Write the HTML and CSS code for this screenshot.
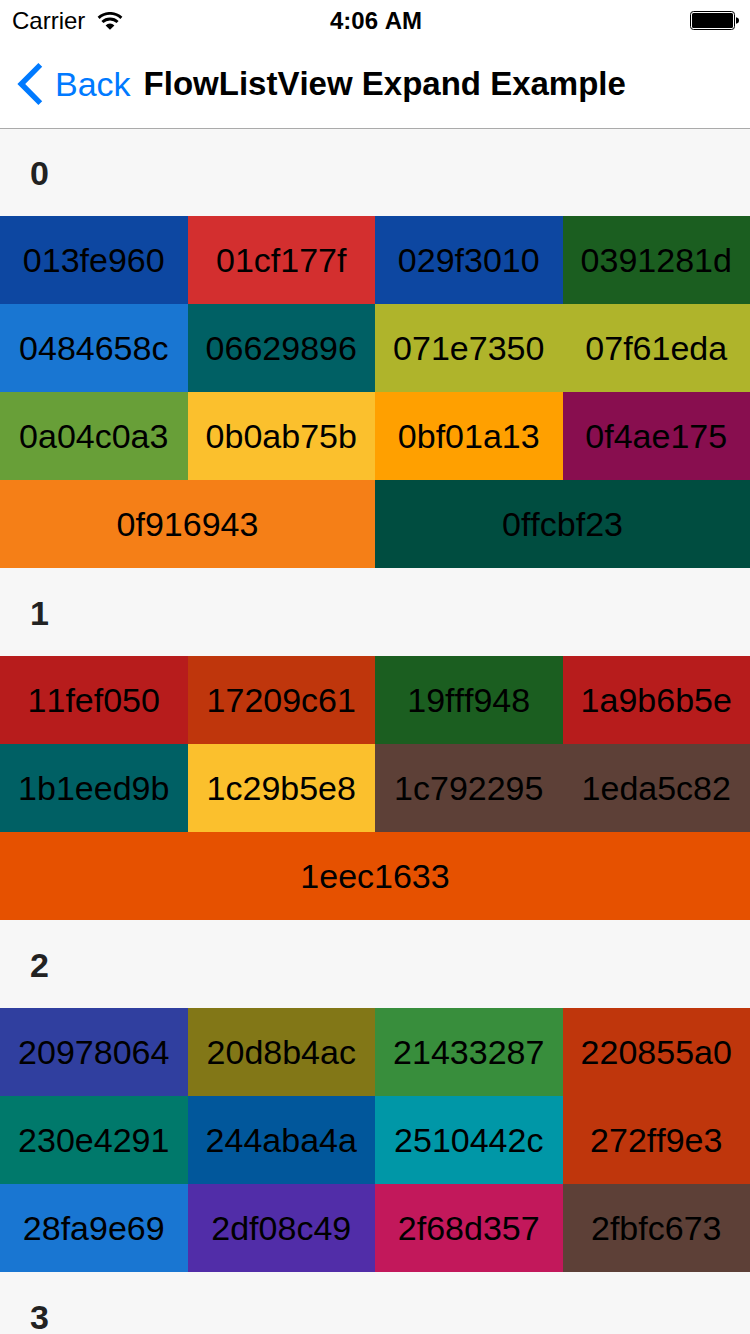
FILE: index.html
```html
<!DOCTYPE html>
<html lang="en">
<head>
<meta charset="utf-8">
<meta name="viewport" content="width=device-width, initial-scale=1">
<title>FlowListView Expand Example</title>
<link rel="stylesheet" href="styles.css">
</head>
<body>
<header class="top">
  <div class="status">
    <div class="carrier">
      <span>Carrier</span>
      <svg class="wifi" viewBox="0 0 26 18" aria-hidden="true">
        <path d="M1.6 5.8A17 17 0 0 1 24.4 5.8" fill="none" stroke="#000" stroke-width="2.9"/>
        <path d="M5.4 10A11 11 0 0 1 20.6 10" fill="none" stroke="#000" stroke-width="2.9"/>
        <path d="M8.6 13.4A6.2 6.2 0 0 1 17.4 13.4L13 17.8Z"/>
      </svg>
    </div>
    <time class="clock">4:06 AM</time>
    <svg class="battery" viewBox="0 0 50 20" aria-hidden="true">
      <rect x=".5" y=".5" width="44" height="18" rx="3" fill="#fff" stroke="#000"/>
      <rect x="2" y="2" width="41" height="15" rx="1.5"/>
      <path d="M46 6.2Q49 6.8 49 9.5T46 12.8Z"/>
    </svg>
  </div>
  <nav class="nav">
    <button class="back" type="button">
      <svg class="chevron" viewBox="0 0 26 42" aria-hidden="true">
        <path d="M21.4 0L25.2 3.8L8.2 21L25.2 38.2L21.4 42L0.4 21Z" fill="#007aff"/>
      </svg>
      <span>Back</span>
    </button>
    <h1 class="title">FlowListView Expand Example</h1>
  </nav>
</header>
<main class="list">
  <section>
    <h2 class="group">0</h2>
    <div class="row"><div class="cell blue-dark">013fe960</div><div class="cell red">01cf177f</div><div class="cell blue-dark">029f3010</div><div class="cell green-dark">0391281d</div></div>
    <div class="row"><div class="cell blue">0484658c</div><div class="cell cyan-dark">06629896</div><div class="cell lime">071e7350</div><div class="cell lime">07f61eda</div></div>
    <div class="row"><div class="cell green-light">0a04c0a3</div><div class="cell yellow">0b0ab75b</div><div class="cell amber">0bf01a13</div><div class="cell pink-dark">0f4ae175</div></div>
    <div class="row"><div class="cell yellow-dark">0f916943</div><div class="cell teal-dark">0ffcbf23</div></div>
  </section>
  <section>
    <h2 class="group">1</h2>
    <div class="row"><div class="cell red-dark">11fef050</div><div class="cell rust">17209c61</div><div class="cell green-dark">19fff948</div><div class="cell red-dark">1a9b6b5e</div></div>
    <div class="row"><div class="cell cyan-dark">1b1eed9b</div><div class="cell yellow">1c29b5e8</div><div class="cell brown">1c792295</div><div class="cell brown">1eda5c82</div></div>
    <div class="row"><div class="cell orange">1eec1633</div></div>
  </section>
  <section>
    <h2 class="group">2</h2>
    <div class="row"><div class="cell indigo">20978064</div><div class="cell lime-dark">20d8b4ac</div><div class="cell green">21433287</div><div class="cell rust">220855a0</div></div>
    <div class="row"><div class="cell teal">230e4291</div><div class="cell sky-dark">244aba4a</div><div class="cell cyan">2510442c</div><div class="cell rust">272ff9e3</div></div>
    <div class="row"><div class="cell blue">28fa9e69</div><div class="cell purple">2df08c49</div><div class="cell pink">2f68d357</div><div class="cell brown">2fbfc673</div></div>
  </section>
  <section>
    <h2 class="group">3</h2>
  </section>
</main>
</body>
</html>
```
FILE: styles.css
```css
* { box-sizing: border-box; }
body {
  margin: 0;
  height: 100vh;
  display: flex;
  flex-direction: column;
  overflow: hidden;
  background: #fff;
  color: #000;
  font-family: "Liberation Sans", Arial, sans-serif;
  font-kerning: none;
}
.top {
  position: relative;
  z-index: 1;
  flex: none;
  background: #fff;
  box-shadow: 0 1px 0 #aaa;
}
.status {
  display: grid;
  grid-template-columns: 1fr auto 1fr;
  align-items: center;
  height: 40px;
  padding: 2px 10px 0 12px;
  font-size: 24px;
  line-height: 38px;
}
.carrier { display: flex; align-items: center; gap: 12px; }
.wifi { width: 26px; height: 18px; }
.clock { font-weight: bold; }
.battery { width: 50px; height: 20px; justify-self: end; }
.nav {
  display: flex;
  align-items: center;
  gap: 13px;
  height: 88px;
  padding: 0 17px;
}
.back {
  display: flex;
  align-items: center;
  gap: 12px;
  padding: 0;
  border: 0;
  background: none;
  color: #007aff;
  font: inherit;
  font-size: 34px;
}
.chevron { width: 26px; height: 42px; }
.title {
  margin: 0;
  font-size: 33px;
  white-space: nowrap;
}
.list {
  flex: 1;
  min-height: 0;
  overflow: hidden;
  background: #f7f7f7;
}
.group {
  margin: 0;
  padding: 2px 30px 0;
  color: #222;
  font-size: 34px;
  line-height: 86px;
}
.row { display: flex; }
.cell {
  flex: 1;
  font-size: 34px;
  line-height: 88px;
  text-align: center;
}
.blue-dark { background: #0d47a1; }
.blue { background: #1976d2; }
.sky-dark { background: #01579b; }
.indigo { background: #303f9f; }
.purple { background: #512da8; }
.red { background: #d32f2f; }
.red-dark { background: #b71c1c; }
.rust { background: #bf360c; }
.orange { background: #e65100; }
.amber { background: #ffa000; }
.yellow { background: #fbc02d; }
.yellow-dark { background: #f57f17; }
.lime { background: #afb42b; }
.lime-dark { background: #827717; }
.green-light { background: #689f38; }
.green { background: #388e3c; }
.green-dark { background: #1b5e20; }
.teal { background: #00796b; }
.teal-dark { background: #004d40; }
.cyan { background: #0097a7; }
.cyan-dark { background: #006064; }
.pink { background: #c2185b; }
.pink-dark { background: #880e4f; }
.brown { background: #5d4037; }
```
